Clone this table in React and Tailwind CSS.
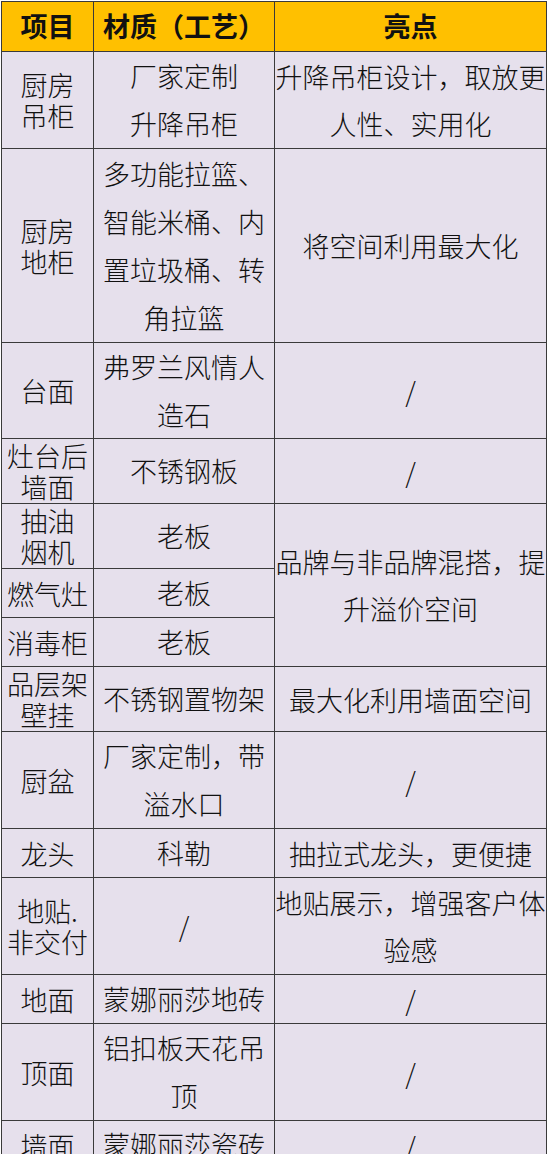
import React from 'react';

const rows = [
    { item: ['厨房', '吊柜'], material: ['厂家定制', '升降吊柜'], point: ['升降吊柜设计，取放更', '人性、实用化'] },
    { item: ['厨房', '地柜'], material: ['多功能拉篮、', '智能米桶、内', '置垃圾桶、转', '角拉篮'], point: ['将空间利用最大化'] },
    { item: ['台面'], material: ['弗罗兰风情人', '造石'], point: ['/'] },
    { item: ['灶台后', '墙面'], material: ['不锈钢板'], point: ['/'] },
    { item: ['抽油', '烟机'], material: ['老板'], point: ['品牌与非品牌混搭，提', '升溢价空间'], span: 3 },
    { item: ['燃气灶'], material: ['老板'] },
    { item: ['消毒柜'], material: ['老板'] },
    { item: ['品层架', '壁挂'], material: ['不锈钢置物架'], point: ['最大化利用墙面空间'] },
    { item: ['厨盆'], material: ['厂家定制，带', '溢水口'], point: ['/'] },
    { item: ['龙头'], material: ['科勒'], point: ['抽拉式龙头，更便捷'] },
    { item: ['地贴.', '非交付'], material: ['/'], point: ['地贴展示，增强客户体', '验感'] },
    { item: ['地面'], material: ['蒙娜丽莎地砖'], point: ['/'] },
    { item: ['顶面'], material: ['铝扣板天花吊', '顶'], point: ['/'] },
    { item: ['墙面'], material: ['蒙娜丽莎瓷砖'], point: ['/'] },
];

const cell = 'flex items-center justify-center text-center whitespace-nowrap border-r border-b border-[#3a3a3a]';

const Lines = ({ lines }) => lines.map((l, i) => <div key={i}>{l}</div>);

const App = () => {
    return (
        <div className="bg-white min-h-screen pl-[1px] pt-[1px] font-['Noto_Sans_CJK_SC',sans-serif] text-[27px] text-[#111]">
            <div className="grid w-[546px] grid-cols-[92px_181px_272px] grid-rows-[50px_97px_194px_96px_65px_65px_49px_49px_65px_97px_49px_97px_49px_97px_49px] border-l border-t border-[#3a3a3a] bg-[#e6e0ec] font-light">
                <div className={`${cell} bg-[#ffc000] font-bold`}>项目</div>
                <div className={`${cell} bg-[#ffc000] font-bold`}>材质（工艺）</div>
                <div className={`${cell} bg-[#ffc000] font-bold`}>亮点</div>

                {rows.map((r, i) => (
                    <React.Fragment key={i}>
                        <div className={`${cell} leading-[31px]`}>
                            <div><Lines lines={r.item} /></div>
                        </div>
                        <div className={`${cell} leading-[48px]`}>
                            <div><Lines lines={r.material} /></div>
                        </div>
                        {r.point && (
                            <div className={`${cell} leading-[47px] ${r.span === 3 ? 'row-span-3' : ''}`}>
                                <div><Lines lines={r.point} /></div>
                            </div>
                        )}
                    </React.Fragment>
                ))}
            </div>
        </div>
    );
};

export default App;
